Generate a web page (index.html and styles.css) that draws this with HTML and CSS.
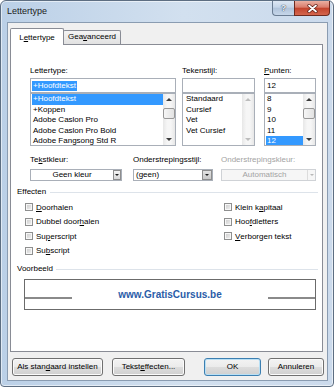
FILE: index.html
```html
<!DOCTYPE html>
<html lang="nl">
<head>
  <meta charset="UTF-8" />
  <title>Lettertype</title>
  <link rel="stylesheet" href="styles.css">
</head>
<body>
  <div class="window">
    <div class="titlebar">
      <span class="title">Lettertype</span>
      <div class="caption">
        <span class="cap-help">?</span>
        <span class="cap-close">
          <svg width="11" height="9" viewBox="0 0 11 9">
            <path d="M2 1.5 L9 7.5 M9 1.5 L2 7.5" stroke="#5a1a12" stroke-width="3.2" stroke-linecap="round"/>
            <path d="M2 1.5 L9 7.5 M9 1.5 L2 7.5" stroke="#ffffff" stroke-width="1.8" stroke-linecap="round"/>
          </svg>
        </span>
      </div>
    </div>

    <div class="client">
      <div class="tabs">
        <div class="tab active">L<u>e</u>ttertype</div>
        <div class="tab">Gea<u>v</u>anceerd</div>
      </div>

      <div class="panel">
        <div class="font-row">
          <div class="field field-font">
            <label>Lettertype:</label>
            <div class="input"><span class="sel-text">+Hoofdtekst</span></div>
            <div class="list">
              <div class="items">
                <div class="sel">+Hoofdtekst</div>
                <div>+Koppen</div>
                <div>Adobe Caslon Pro</div>
                <div>Adobe Caslon Pro Bold</div>
                <div>Adobe Fangsong Std R</div>
              </div>
              <div class="scroll">
                <div class="up"></div>
                <div class="track"><div class="thumb"></div></div>
                <div class="down"></div>
              </div>
            </div>
          </div>
          <div class="field field-style">
            <label>Tekenstijl:</label>
            <div class="input"></div>
            <div class="list">
              <div class="items">
                <div>Standaard</div>
                <div>Cursief</div>
                <div>Vet</div>
                <div>Vet Cursief</div>
              </div>
              <div class="scroll disabled">
                <div class="up"></div>
                <div class="track"></div>
                <div class="down"></div>
              </div>
            </div>
          </div>
          <div class="field field-size">
            <label><u>P</u>unten:</label>
            <div class="input">12</div>
            <div class="list">
              <div class="items">
                <div>8</div>
                <div>9</div>
                <div>10</div>
                <div>11</div>
                <div class="sel">12</div>
              </div>
              <div class="scroll">
                <div class="up"></div>
                <div class="track"><div class="thumb"></div></div>
                <div class="down"></div>
              </div>
            </div>
          </div>
        </div>

        <div class="drop-row">
          <div class="drop-field drop-color">
            <label>Te<u>k</u>stkleur:</label>
            <div class="dropdown">
              <span class="value center">Geen kleur</span>
              <span class="arrow"></span>
            </div>
          </div>
          <div class="drop-field drop-line">
            <label>Onderstrepingssti<u>j</u>l:</label>
            <div class="dropdown">
              <span class="value">(geen)</span>
              <span class="arrow dark"></span>
            </div>
          </div>
          <div class="drop-field drop-linecolor disabled">
            <label>Onderstrepingskleur:</label>
            <div class="dropdown">
              <span class="value center">Automatisch</span>
              <span class="arrow"></span>
            </div>
          </div>
        </div>

        <div class="section">Effecten</div>
        <div class="effects">
          <div class="check"><span class="box"></span><u>D</u>oorhalen</div>
          <div class="check"><span class="box"></span>Dubbel door<u>h</u>alen</div>
          <div class="check"><span class="box"></span>Su<u>p</u>erscript</div>
          <div class="check"><span class="box"></span>Su<u>b</u>script</div>
          <div class="check"><span class="box"></span>Klein k<u>a</u>pitaal</div>
          <div class="check"><span class="box"></span>Hoo<u>f</u>dletters</div>
          <div class="check"><span class="box"></span><u>V</u>erborgen tekst</div>
        </div>

        <div class="section section-preview">Voorbeeld</div>
        <div class="preview">
          <span class="rule"></span>
          <span class="sample">www.GratisCursus.be</span>
          <span class="rule"></span>
        </div>
      </div>

      <div class="buttons">
        <div class="button b-default">Als stan<u>d</u>aard instellen</div>
        <div class="button b-effects">Tekst<u>e</u>ffecten...</div>
        <div class="button b-ok">OK</div>
        <div class="button b-cancel">Annuleren</div>
      </div>
    </div>
  </div>
</body>
</html>
```

FILE: styles.css
```css
* {margin: 0; padding: 0; box-sizing: border-box;}
body {
  width: 334px;
  height: 387px;
  overflow: hidden;
  font-family: "Liberation Sans", Arial, sans-serif;
  font-size: 8px;
  color: #000;
  background: #fff;
}
u { text-underline-offset: 1px; }

/* window frame */
.window {
  width: 334px;
  height: 387px;
  border: 1px solid #5d6e82;
  border-radius: 6px 6px 4px 4px;
  background: linear-gradient(to right, #bbd0e7, #d2e0ef 55%, #cbdaec);
  box-shadow: inset 0 0 0 1px rgba(255, 255, 255, 0.55);
  padding: 0 5px 5px 6px;
  display: flex;
  flex-direction: column;
}
.titlebar {
  height: 21px;
  display: flex;
  align-items: flex-start;
}
.title {
  font-size: 9px;
  line-height: 21px;
  color: #1b1b1b;
}
.caption {
  margin-left: auto;
  margin-right: -2px;
  display: flex;
}
.cap-help {
  width: 22px;
  height: 15px;
  border: 1px solid #6a7c92;
  border-top: none;
  border-right: none;
  border-radius: 0 0 0 4px;
  background: linear-gradient(#dde7f3, #c5d5e8 45%, #b0c3da 50%, #c6d6e9);
  color: #eef3f9;
  font-weight: bold;
  font-size: 9px;
  line-height: 14px;
  text-align: center;
  text-shadow: 0 0 1px #34465c, 0 0 1px #34465c;
}
.cap-close {
  width: 36px;
  height: 15px;
  border: 1px solid #6e2a1f;
  border-top: none;
  border-radius: 0 0 4px 0;
  background: linear-gradient(#eab0a2, #d97c6b 45%, #c2432c 50%, #d4664e);
  display: flex;
  align-items: center;
  justify-content: center;
}

/* client area */
.client {
  flex: 1;
  background: #f0f0f0;
  border: 1px solid #8a9cb1;
  padding: 5px 4px 0 2px;
  display: flex;
  flex-direction: column;
}
.tabs {
  height: 16px;
  display: flex;
  align-items: flex-end;
  position: relative;
  z-index: 1;
}
.tab {
  width: 58px;
  height: 14px;
  margin-left: -1px;
  border: 1px solid #898c95;
  border-bottom: none;
  border-radius: 2px 2px 0 0;
  background: linear-gradient(#f4f4f4, #e1e1e1);
  text-align: center;
  line-height: 12px;
}
.tab.active {
  width: 54px;
  height: 17px;
  margin-left: 0;
  margin-bottom: -1px;
  padding-top: 1px;
  background: #fff;
  line-height: 15px;
  position: relative;
  z-index: 2;
}
.panel {
  height: 308px;
  background: #fff;
  border: 1px solid #898c95;
  padding: 21px 4px 0 6px;
}

/* font / style / size lists */
.font-row {
  display: flex;
  margin-left: 13px;
}
.field {
  display: flex;
  flex-direction: column;
}
.field-font { width: 146px; margin-right: 6px; }
.field-style { width: 73px; margin-right: 9px; }
.field-size { width: 52px; }
.field label {
  height: 12px;
  line-height: 10px;
}
.input {
  height: 15px;
  border: 1px solid #a9afb8;
  background: #fff;
  padding: 1px 1px 0 2px;
  line-height: 12px;
}
.sel-text {
  display: inline-block;
  background: #3399ff;
  color: #fff;
  line-height: 10px;
  margin-left: -1px;
  padding: 0 1px;
}
.list {
  height: 53px;
  border: 1px solid #a9afb8;
  background: #fff;
  display: flex;
}
.items {
  flex: 1;
  padding-left: 1px;
  overflow: hidden;
}
.items div {
  height: 10.5px;
  line-height: 10.5px;
  padding-left: 1px;
  white-space: nowrap;
}
.field-style .items div { padding-left: 2px; }
.items .sel {
  background: #3399ff;
  color: #fff;
}
.scroll {
  width: 12px;
  display: flex;
  flex-direction: column;
  background: linear-gradient(to right, #e7e7e7, #f6f6f6 35%, #f6f6f6 65%, #e7e7e7);
}
.scroll .up,
.scroll .down {
  height: 11px;
  display: flex;
  align-items: center;
  justify-content: center;
}
.scroll .up::before {
  content: "";
  border-left: 3px solid transparent;
  border-right: 3px solid transparent;
  border-bottom: 3px solid #3c3c3c;
}
.scroll .down::before {
  content: "";
  border-left: 3px solid transparent;
  border-right: 3px solid transparent;
  border-top: 3px solid #3c3c3c;
}
.scroll.disabled .up::before { border-bottom-color: #bdbdbd; }
.scroll.disabled .down::before { border-top-color: #bdbdbd; }
.track { flex: 1; }
.thumb {
  height: 11px;
  margin: 3px 0 0 0;
  border: 1px solid #989898;
  border-radius: 2px;
  background: linear-gradient(to right, #f6f6f6, #e2e2e2);
}

/* dropdowns */
.drop-row {
  display: flex;
  margin: 9px 0 0 13px;
}
.drop-field {
  display: flex;
  flex-direction: column;
}
.drop-color { width: 92px; margin-right: 11px; }
.drop-line { width: 80px; margin-right: 8px; }
.drop-linecolor { width: 95px; }
.drop-field label {
  height: 14px;
  line-height: 10px;
}
.dropdown {
  height: 12px;
  border: 1px solid #a9afb8;
  background: #fff;
  display: flex;
  align-items: center;
}
.dropdown .value {
  flex: 1;
  line-height: 10px;
  padding-left: 2px;
}
.dropdown .value.center {
  text-align: center;
  padding-left: 0;
}
.dropdown .arrow {
  width: 8px;
  height: 10px;
  border: 1px solid #8e8e8e;
  background: linear-gradient(#f4f4f4, #d9d9d9);
  display: flex;
  align-items: center;
  justify-content: center;
}
.dropdown .arrow.dark {
  width: 10px;
  background: linear-gradient(#e2e2e2, #c9c9c9);
}
.dropdown .arrow::before {
  content: "";
  border-left: 2px solid transparent;
  border-right: 2px solid transparent;
  border-top: 2px solid #1e1e1e;
}
.drop-field.disabled label { color: #a3a3a3; }
.drop-field.disabled .dropdown {
  border-color: #cfd2d6;
  background: #f6f6f6;
}
.drop-field.disabled .value { color: #a3a3a3; }
.drop-field.disabled .arrow {
  border: none;
  border-left: 1px solid #dcdcdc;
  background: none;
}
.drop-field.disabled .arrow::before { border-top-color: #b8b8b8; }

/* effects */
.section {
  display: flex;
  align-items: center;
  margin-top: 6px;
  line-height: 10px;
}
.section::after {
  content: "";
  flex: 1;
  height: 1px;
  margin-left: 4px;
  background: #dde3ea;
}
.effects {
  display: grid;
  grid-template-columns: 199px auto;
  grid-template-rows: repeat(4, 14.5px);
  grid-auto-flow: column;
  margin: 3px 0 0 8px;
}
.check {
  display: flex;
  align-items: center;
}
.check .box {
  width: 8px;
  height: 8px;
  margin-right: 3px;
  border: 1px solid #8e8f8f;
  background: linear-gradient(135deg, #c9c9c9, #f3f3f3);
  box-shadow: inset 0 0 0 1px #f7f7f7;
}

/* preview */
.section-preview { margin-top: 6px; }
.section-preview::after { margin-left: 3px; }
.preview {
  width: 292px;
  height: 31px;
  margin: 5px 0 0 7px;
  border: 1px solid #6b6b6b;
  display: flex;
  align-items: center;
}
.preview .rule {
  width: 47px;
  height: 2px;
  margin-top: 7px;
  background: #8a8a8a;
}
.preview .sample {
  flex: 1;
  text-align: center;
  font-weight: bold;
  font-size: 10px;
  color: #2a5ca8;
}

/* buttons */
.buttons {
  display: flex;
  margin-top: 6px;
}
.button {
  flex-shrink: 0;
  height: 18px;
  border: 1px solid #707070;
  border-radius: 3px;
  background: linear-gradient(#f3f3f3, #ebebeb 50%, #dddddd 50%, #cfcfcf);
  box-shadow: inset 0 0 0 1px #fbfbfb;
  text-align: center;
  line-height: 16px;
}
.b-default { width: 91px; margin-left: 2px; }
.b-effects { width: 73px; margin-left: 9px; }
.b-ok {
  width: 57px;
  margin-left: 19px;
  border-color: #3c7fb1;
  box-shadow: inset 0 0 0 1px #b9e0f5;
}
.b-cancel { width: 56px; margin-left: 7px; }
```
